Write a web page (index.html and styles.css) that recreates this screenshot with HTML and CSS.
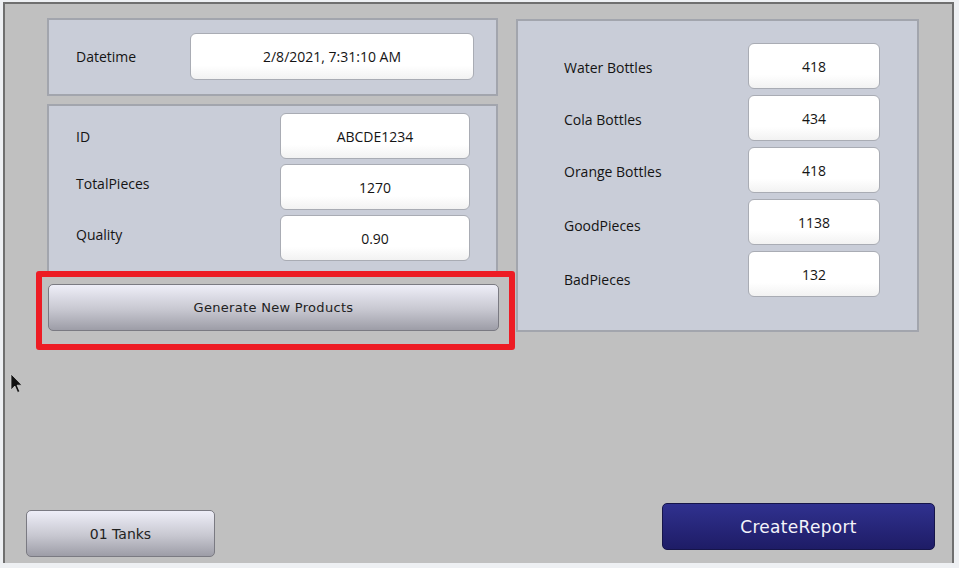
FILE: index.html
```html
<!DOCTYPE html>
<html lang="en">
<head>
    <meta charset="UTF-8">
    <title>Production Screen</title>
    <link rel="stylesheet" href="styles.css">
</head>
<body>
    <div class="screen">
        <div class="top">
            <div class="left-col">
                <div class="panel panel-date">
                    <div class="row">
                        <span class="label label-date">Datetime</span>
                        <div class="field field-date">2/8/2021, 7:31:10 AM</div>
                    </div>
                </div>

                <div class="panel panel-product">
                    <div class="row">
                        <span class="label label-product">ID</span>
                        <div class="field field-product">ABCDE1234</div>
                    </div>
                    <div class="row">
                        <span class="label label-product label-high">TotalPieces</span>
                        <div class="field field-product">1270</div>
                    </div>
                    <div class="row">
                        <span class="label label-product label-high">Quality</span>
                        <div class="field field-product">0.90</div>
                    </div>
                </div>

                <button class="btn btn-grey btn-generate">Generate New Products</button>
                <div class="highlight"></div>
            </div>

            <div class="panel panel-counts">
                <div class="row">
                    <span class="label label-count">Water Bottles</span>
                    <div class="field field-count">418</div>
                </div>
                <div class="row">
                    <span class="label label-count">Cola Bottles</span>
                    <div class="field field-count">434</div>
                </div>
                <div class="row">
                    <span class="label label-count">Orange Bottles</span>
                    <div class="field field-count">418</div>
                </div>
                <div class="row">
                    <span class="label label-count label-low">GoodPieces</span>
                    <div class="field field-count">1138</div>
                </div>
                <div class="row">
                    <span class="label label-count label-lower">BadPieces</span>
                    <div class="field field-count">132</div>
                </div>
            </div>
        </div>

        <div class="bottom">
            <button class="btn btn-grey btn-tanks">01 Tanks</button>
            <button class="btn btn-report">CreateReport</button>
        </div>

        <!-- mouse pointer from the screenshot -->
        <svg class="cursor" width="13" height="21" viewBox="0 0 13 21">
            <path d="M1 1 L1 17 L4.8 13 L7.6 19.5 L9.8 18.5 L7.1 12.2 L12 12.2 Z" fill="#111" stroke="#d8d8d8" stroke-width="0.7"/>
        </svg>
    </div>
</body>
</html>
```

FILE: styles.css
```css
* {
    margin: 0;
    padding: 0;
    box-sizing: border-box;
}

body {
    background: #eef0f3;
    font-family: "Open Sans", "DejaVu Sans", sans-serif;
    color: #222;
}

.screen {
    position: relative;
    width: 951px;
    height: 561px;
    margin: 2px 0 0 3px;
    background: #c0c0c0;
    border: 2px solid #6f6f6f;
    border-bottom: none;
    display: flex;
    flex-direction: column;
}

.top {
    display: flex;
    align-items: flex-start;
    padding: 14px 0 0 42px;
    gap: 18px;
}

.left-col {
    position: relative;
    width: 451px;
    display: flex;
    flex-direction: column;
}

.panel {
    background: #c9cdd8;
    border: 2px solid #a2a5ad;
}

.panel-date {
    height: 78px;
    padding: 13px 0 0 27px;
}

.panel-product {
    margin-top: 8px;
    height: 169px;
    padding: 7px 0 0 27px;
    display: flex;
    flex-direction: column;
    gap: 5px;
}

.panel-counts {
    width: 403px;
    height: 313px;
    margin-top: 1px;
    padding: 22px 0 0 46px;
    display: flex;
    flex-direction: column;
    gap: 6px;
}

.row {
    display: flex;
    align-items: center;
}

.label {
    font-size: 14px;
    font-weight: 500;
    color: #141414;
}

.label-date { width: 114px; }
.label-product { width: 204px; }
.label-count { width: 184px; padding-top: 2px; }
.label-high { padding-bottom: 8px; }
.label-low { padding-top: 6px; }
.label-lower { padding-top: 10px; }

.field {
    height: 46px;
    display: flex;
    align-items: center;
    justify-content: center;
    background: linear-gradient(to bottom, #ffffff 70%, #f2f2f2);
    border: 1px solid #a9acb4;
    border-radius: 6px;
    font-size: 14px;
    font-weight: 500;
    color: #141414;
}

.field-date { width: 284px; height: 47px; }
.field-product { width: 190px; }
.field-count { width: 132px; }

.btn {
    height: 47px;
    border-radius: 5px;
    font-family: "DejaVu Sans", sans-serif;
    cursor: pointer;
}

.btn-grey {
    background: linear-gradient(to bottom, #eeeef8, #c7c7d0 55%, #9d9da7);
    border: 1px solid #7a7a82;
    color: #222;
    font-size: 13px;
    letter-spacing: 0.3px;
}

.btn-generate {
    margin: 11px 0 0 1px;
    width: 451px;
}

.highlight {
    position: absolute;
    left: -11px;
    top: 253px;
    width: 479px;
    height: 79px;
    border: 6px solid #ed1c24;
    border-radius: 3px;
    pointer-events: none;
}

.bottom {
    margin-top: auto;
    display: flex;
    justify-content: space-between;
    align-items: flex-start;
    padding: 0 17px 6px 21px;
}

.btn-tanks {
    width: 189px;
    margin-top: 7px;
    font-size: 14px;
    letter-spacing: 0;
}

.btn-report {
    width: 273px;
    background: linear-gradient(to bottom, #30318f, #1e1c66);
    border: 1px solid #16154a;
    color: #f4f4fa;
    font-size: 17px;
    letter-spacing: 0.3px;
}

.cursor {
    position: absolute;
    left: 5px;
    top: 369px;
}
```
